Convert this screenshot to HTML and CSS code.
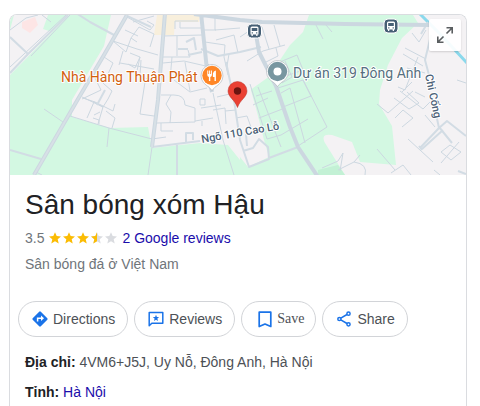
FILE: index.html
```html
<!DOCTYPE html>
<html lang="vi">
<head>
<meta charset="utf-8">
<meta name="viewport" content="width=device-width, initial-scale=1">
<title>Sân bóng xóm Hậu</title>
<link rel="stylesheet" href="styles.css">
</head>
<body>
<main class="card">
  <div class="map">
    <svg class="map-art" viewBox="10 15 456 160" preserveAspectRatio="xMidYMid slice" role="img" aria-label="Map">
      <rect class="land" x="10" y="15" width="456" height="160"/>
      <!-- parks -->
      <g class="green">
        <path d="M69 15H111L104 46L72 100L72 117L110 128L148 127L152 148L200 143L228 145L240 160L238 100L253 88L270 76L280 60L290 45L303 32L309 15H413L418 23L402 38L388 65L380 90L379 104L392 126L396 165L360 162L352 142L332 135Q320 133 325 143L345 175H10V75Z"/>
        <path d="M10 15H14L10 30ZM48 15H67L52 32L43 29Z"/>
      </g>
      <path class="land" d="M232 92L250 87L257 112L264 140L269 157L248 167L240 157L230 144L218 122Z"/>
      <path class="grove" d="M318 170L338 165L345 175H318Z"/>
      <path class="sand" d="M157 15H200L199 22H175L174 35H154Z"/>
      <path class="pink" d="M22 22L35 17L38 25L30 33L22 28Z"/>
      <path class="water" d="M420 14L440 34L467 63"/>
      <!-- lanes -->
      <g class="lane">
        <path d="M10 30L26 18L38 15M10 67L66 15M31 56L70 15M42 15L51 22"/>
        <path d="M44 109L63 122M36 172L42 175M70 116L109 128L152 139L166 137M109 128L107 147M152 147L148 175"/>
        <path d="M127 17L150 30L154 25L147 21M133 22L154 16M139 27L131 38L126 52L113 41L137 49L158 55M139 27L154 34L150 47M125 30L138 36M131 38L137 42M123 51L119 65M104 57L113 63L108 74M130 53L140 57L135 68L128 64M140 57L137 71"/>
        <path d="M96 76L104 84L112 91L108 99L103 107L94 102L87 118M82 97L103 107L98 124M93 74L101 90L82 99M83 98L95 102L113 111L115 104M106 111L115 118L112 128M94 115L100 112M93 118L99 120V124"/>
        <path d="M145 82L140 114L154 116M141 76L154 82M120 63L154 69M141 60L140 76"/>
        <path d="M163 36L202 35M175 29V21H198M180 22V28H204M177 36V56M163 57H190L188 50M163 63L184 61L210 67M172 57L170 80M185 62L190 91M174 80L190 92L207 88M161 95H174Q185 95 185 105L195 108V122L157 123M161 123V131H173M171 95L166 104L171 112L170 123M201 108L221 105M200 99H205V105H200ZM202 121V126M195 121L213 118"/>
        <path d="M215 18V30L240 28M203 30H216M216 40L234 35L238 53M205 42L225 45L224 57L228 75M211 72L222 70M229 54L227 66M207 63L214 70L211 82M213 110L225 108L226 124M217 97L234 93M213 93L223 140L234 175M225 111L236 110M236 118L247 116L252 130"/>
        <path d="M262 27L269 49M274 25L280 46M240 37L249 31M247 61L263 51L285 45M266 62L278 56L276 48M270 66L297 55L303 70L286 76M285 61L292 77L282 83M278 88L303 80L311 96L283 107M303 80L327 127L298 146M281 93L290 88L305 143M272 91L256 96M268 98L253 105M285 108L259 118M258 87L281 147M250 84L267 139L281 135L308 119"/>
        <path d="M316 25L323 39M326 25L332 32M405 48L426 59M403 54L423 66M412 33L419 42L426 30M407 68L425 73M402 92L412 82M377 104L388 113L413 91M394 98L409 109L419 103L407 92M395 118L403 110L413 118L402 127M400 91L423 109L430 102M415 92L425 97M425 115L435 127M408 139L433 162M377 149L395 170M340 171L343 153M354 162Q368 164 365 175M360 155L354 162L338 170M391 173L403 165L411 175M441 163L459 142M441 152L450 145L461 152L451 160ZM457 80L466 83M434 170L440 175M322 168L338 161L343 153M418 57L405 90L398 87"/>
      </g>
      <!-- streets -->
      <g class="street">
        <path d="M10 37L28 54M10 73L28 54L68 15M76 13L90 22L114 35M10 150L41 159M125 15L151 27"/>
        <path d="M152 147L200 141M177 145V175M202 52L188 55M201 49L218 56L240 52L261 47M178 49H188M186 42L194 38L196 50M105 90L97 105M186 142V133H193V140"/>
        <path d="M226 62L234 100L240 140L249 167L269 159L268 147L259 139L253 148L243 151M247 146L246 134M269 158L298 147"/>
        <path d="M431 35L425 60L429 75M439 128L447 121L466 136M439 128L420 148M443 130L422 149M419 146L422 150M439 127L452 143M428 22L421 34M436 114L439 128M458 171L466 174"/>
      </g>
      <!-- main roads -->
      <g class="road">
        <path d="M127 15L104 55L78 99L34 175M165 13L158 100L152 147M201 13L207 70L212 92M194 14L240 20L262 22L345 24L430 25"/>
        <path d="M254 23L259 52L276 86L290 127L298 147L318 177"/>
      </g>
      <path class="hairline" d="M127 15L104 55L78 99L34 175M165 13L158 100L152 147"/>
      <!-- labels -->
      <g class="label">
        <text class="food" x="61" y="82">Nhà Hàng Thuận Phát</text>
        <text class="place" x="293" y="78">Dự án 319 Đông Anh</text>
        <text class="way" transform="translate(202 143) rotate(-10)">Ngõ 110 Cao Lỗ</text>
        <text class="way" transform="translate(425 75) rotate(78)">Chi Cống</text>
      </g>
      <!-- restaurant marker -->
      <path fill="#fff" stroke="#a9afb5" stroke-width=".6" d="M212 64.500a11.200 11.200 0 0 1 6 20.500q-3 1.500-6 5.500q-3-4-6-5.500a11.200 11.200 0 0 1 6-20.500Z"/>
      <circle cx="212" cy="75.500" r="9.700" fill="#ff8626"/>
      <path fill="#fff" d="M207.300 70.500h1v3.500h.8v-3.500h1v3.500h.8v-3.500h1v4.500q0 1.500-1.600 2v4h-1.400v-4q-1.600-.5-1.600-2ZM215.900 70.500v10.500h-1.400v-4h-1.600v-3.500q.4-2.500 3-3Z"/>
      <!-- project marker -->
      <path fill="#fff" stroke="#a9afb5" stroke-width=".6" d="M277.500 60.500a11.200 11.200 0 0 1 6 20.500q-3 1.500-6 5.500q-3-4-6-5.500a11.200 11.200 0 0 1 6-20.500Z"/>
      <circle cx="277.500" cy="71.500" r="9.700" fill="#7896a0"/>
      <circle cx="277.500" cy="71.500" r="4" fill="#fff"/>
      <!-- bus stops -->
      <g id="bus">
        <rect x="247.500" y="24" width="14" height="14" rx="4" fill="#465f75" stroke="#fff"/>
        <path fill="#fff" d="M252 26.500h5q1.500 0 1.500 1.500v6.500h-1v1.500h-1.300v-1.500h-3.400V36h-1.300v-1.500h-1V28q0-1.500 1.500-1.500Z"/>
        <path fill="#465f75" d="M251.700 28h5.600v3h-5.600ZM251.700 32.300h1.200v1.200h-1.200ZM256.100 32.300h1.200v1.200h-1.200Z"/>
      </g>
      <use href="#bus" x="136.500" y="-5"/>
      <!-- selected place -->
      <path fill="#ea4033" stroke="#b8372c" stroke-width=".5" d="M237.500 81.500a9.500 9.500 0 0 1 9.500 9.500c0 6-7 9-9.500 16.500c-2.500-7.500-9.500-10.500-9.500-16.500a9.500 9.500 0 0 1 9.500-9.500Z"/>
      <circle cx="237.500" cy="91" r="3.700" fill="#6b1510"/>
    </svg>
    <button class="expand" type="button" aria-label="Expand map">
      <svg width="18" height="18" viewBox="0 0 18 18" fill="none" stroke="#5a5d60" stroke-width="1.600"><path d="M10.500 1.800h5.700v5.700M16 2l-5.500 5.500M1.800 10.500v5.700h5.700M2 16l5.500-5.500"/></svg>
    </button>
  </div>
  <div class="info">
    <h1>Sân bóng xóm Hậu</h1>
    <div class="rating">
      <span>3.5</span>
      <svg class="stars" width="68" height="12" viewBox="0 0 68 12" role="img" aria-label="3.5 / 5">
        <defs>
          <path id="star" d="M6 .2L7.700 4.100L12 4.500L8.700 7.300L9.700 11.500L6 9.300L2.300 11.500L3.300 7.300L0 4.500L4.300 4.100Z"/>
          <clipPath id="half"><path d="M0 0H6V12H0Z"/></clipPath>
        </defs>
        <g fill="#fbbc04"><use href="#star"/><use href="#star" x="14"/><use href="#star" x="28"/></g>
        <g fill="#dadce0"><use href="#star" x="42"/><use href="#star" x="56"/></g>
        <g transform="translate(42 0)" fill="#fbbc04"><use href="#star" clip-path="url(#half)"/></g>
      </svg>
      <a href="#reviews">2 Google reviews</a>
    </div>
    <p class="kind">Sân bóng đá ở Việt Nam</p>
  </div>
  <div class="actions">
    <button class="pill" type="button">
      <svg width="16" height="16" viewBox="0 0 16 16"><path fill="#1a73e8" d="M7.200.7q.8-.7 1.600 0l6.500 6.500q.7.8 0 1.600l-6.500 6.500q-.8.700-1.600 0L.7 8.800q-.7-.8 0-1.600Z"/><path fill="none" stroke="#fff" stroke-width="1.500" d="M5.600 10.500V7.300h4.500"/><path fill="#fff" d="M9 4.500l3 2.800l-3 2.800Z"/></svg>
      Directions
    </button>
    <button class="pill" type="button">
      <svg width="16" height="16" viewBox="0 0 16 16"><path fill="none" stroke="#1a73e8" stroke-width="1.500" stroke-linejoin="round" d="M1.200 1.500h13.600v10.800H3.800l-2.600 2.500Z"/><path fill="#1a73e8" d="M8 3.700l.9 2.200l2.300.2l-1.800 1.500l.6 2.300l-2-1.200l-2 1.200l.6-2.300l-1.800-1.500l2.300-.2Z"/></svg>
      Reviews
    </button>
    <button class="pill save" type="button">
      <svg width="14" height="17" viewBox="0 0 14 17"><path fill="none" stroke="#1a73e8" stroke-width="1.700" stroke-linejoin="round" d="M1.200 1.200h11.600v14.300L7 13l-5.800 2.500Z"/></svg>
      Save
    </button>
    <button class="pill share" type="button">
      <svg width="14" height="16" viewBox="0 0 14 16" fill="none" stroke="#1a73e8" stroke-width="1.500"><path d="M3.800 7.200l6.200-3.700M3.800 8.800l6.200 3.700"/><circle cx="2.400" cy="8" r="1.600"/><circle cx="11.500" cy="2.700" r="1.600"/><circle cx="11.500" cy="13.300" r="1.600"/></svg>
      Share
    </button>
  </div>
  <div class="facts">
    <p><b>Địa chỉ:</b> 4VM6+J5J, Uy Nỗ, Đông Anh, Hà Nội</p>
    <p><b>Tỉnh:</b> <a href="#hanoi">Hà Nội</a></p>
  </div>
</main>
</body>
</html>
```
FILE: styles.css
```css
* { box-sizing: border-box; }
html { background: #fff; overflow: hidden; }
body {
  margin: 0;
  padding: 14px 13px 0 9px;
  font: 14px/20px "Liberation Sans", Arial, sans-serif;
  color: #4d5156;
}
.card {
  border: 1px solid #dadce0;
  border-bottom: 0;
  border-radius: 8px 8px 0 0;
}
h1, p { margin: 0; }
a { color: #1a0dab; text-decoration: none; }

.map { position: relative; height: 160px; overflow: hidden; border-radius: 7px 7px 0 0; }
.map-art { display: block; width: 100%; height: 100%; }
.land { fill: #f4f2f4; }
.green { fill: #d3f8e2; }
.grove { fill: #c3f1d5; }
.sand { fill: #f8efdc; }
.pink { fill: #fde5e5; }
.water { fill: none; stroke: #8bd9ec; stroke-width: 3; }
.lane, .street, .road, .hairline { fill: none; stroke-linejoin: round; }
.lane { stroke: #ccd7e0; stroke-width: 1; }
.street { stroke: #d2dce4; stroke-width: 2; }
.road { stroke: #ccd7e0; stroke-width: 4; }
.hairline { stroke: #d7e0e6; stroke-width: 2; }
.label { font-family: Roboto, sans-serif; paint-order: stroke; stroke: #fff; stroke-width: 2px; stroke-linejoin: round; }
.food { font-size: 14px; fill: #d2600f; }
.place { font-size: 14px; fill: #567080; }
.way { font-size: 11px; font-weight: 500; fill: #4a6076; }
.expand {
  position: absolute;
  top: 4px;
  right: 5px;
  display: grid;
  place-items: center;
  width: 32px;
  height: 32px;
  padding: 0;
  border: 0;
  border-radius: 2px;
  background: rgba(255, 255, 255, .92);
  box-shadow: 0 1px 2px rgba(0, 0, 0, .15);
}

.info { padding: 12px 15px 0; }
h1 { font-size: 28px; line-height: 36px; font-weight: 400; color: #202124; }
.rating { display: flex; align-items: center; gap: 5px; margin-top: 5px; color: #70757a; }
.kind { margin-top: 6px; color: #70757a; }

.actions { display: flex; gap: 6px; padding: 27px 8px 0; }
.pill {
  display: flex;
  align-items: center;
  gap: 5px;
  height: 36px;
  padding: 0 12px 0 13px;
  border: 1px solid #d2d4d8;
  border-radius: 18px;
  background: #fff;
  color: #4d5156;
  font: inherit;
}
.save { padding: 0 11px 0 16px; font-family: "Liberation Serif", "Times New Roman", serif; }
.share { padding: 0 12px 0 14px; gap: 6px; }

.facts { display: grid; gap: 10px; padding: 15px 15px 4px; }
.facts b { color: #202124; }
```
